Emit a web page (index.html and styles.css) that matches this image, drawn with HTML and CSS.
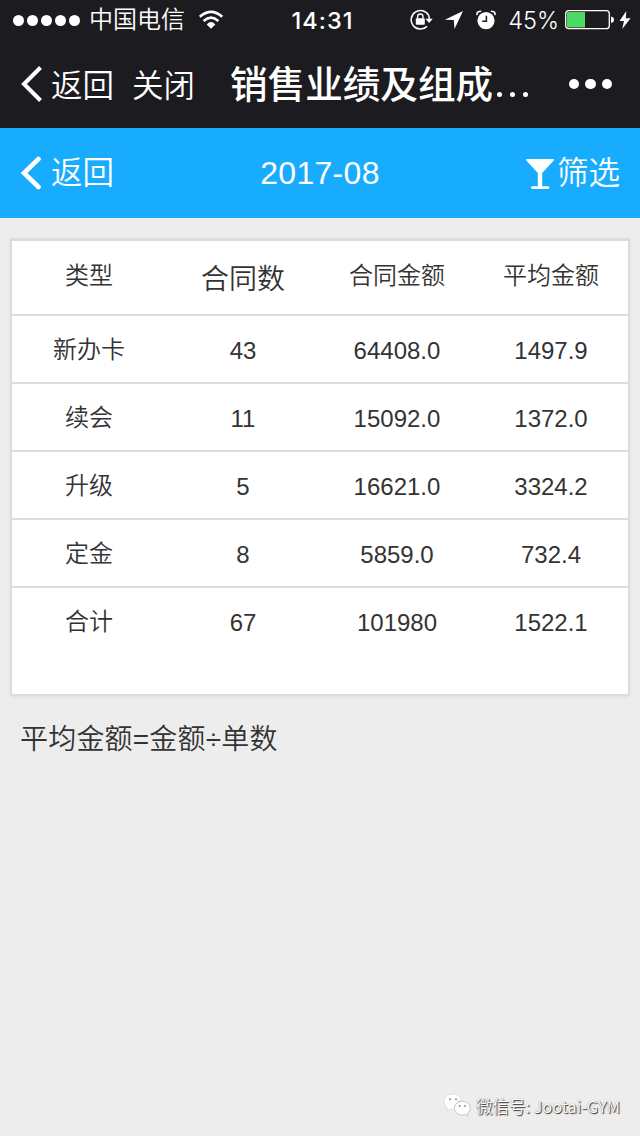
FILE: index.html
```html
<!DOCTYPE html>
<html lang="zh-CN">
<head>
    <meta charset="UTF-8">
    <meta name="viewport" content="width=device-width, initial-scale=1.0">
    <title>销售业绩及组成</title>
    <link rel="stylesheet" href="styles.css">
</head>
<body>

    <!-- Status bar -->
    <div class="status-bar">
        <div class="status-left">
            <div class="signal"><i></i><i></i><i></i><i></i><i></i></div>
            <span class="carrier">中国电信</span>
            <svg class="wifi" width="26" height="20" viewBox="0 0 26 20" fill="none" stroke="#fff" stroke-width="2.6">
                <path d="M1.8 6.8Q13-3.2 24.2 6.8" />
                <path d="M5.6 10.9Q13 4.5 20.4 10.9" />
                <path d="M8.7 14.4Q13 9.8 17.3 14.4L13 18.8Z" fill="#fff" stroke="none" />
            </svg>
        </div>
        <span class="clock">14:31</span>
        <div class="status-right">
            <svg width="24" height="22" viewBox="0 0 24 22">
                <path d="M19.6 6.2A9.3 9.3 0 1 0 18 17.4M19.6 6.2A9.3 9.3 0 0 1 20.2 10" fill="none" stroke="#fff" stroke-width="1.5" />
                <path d="M16.4 9.8H23.8L20.1 14Z" fill="#fff" />
                <rect x="6.8" y="9.2" width="9" height="6.6" rx="0.8" fill="#fff" />
                <path d="M8.6 9.5V7.7a2.7 2.7 0 0 1 5.4 0V9.5" fill="none" stroke="#fff" stroke-width="1.4" />
            </svg>
            <svg class="location" width="20" height="20" viewBox="0 0 20 20">
                <path d="M19 1L.8 9.7L9.8 10.1L10.5 19Z" fill="#fff" />
            </svg>
            <svg class="alarm" width="20" height="20" viewBox="0 0 20 20">
                <circle cx="10" cy="10.6" r="8.6" fill="#fff" />
                <path d="M1.1 5.1Q.3 1.2 5.2 1.2M18.9 5.1Q19.7 1.2 14.8 1.2" fill="none" stroke="#fff" stroke-width="1.6" />
                <path d="M10.4 5.7V11.2H6.2" fill="none" stroke="#1c1c20" stroke-width="1.5" />
            </svg>
            <span class="percent">45%</span>
            <svg class="battery" width="49" height="20" viewBox="0 0 49 20">
                <rect x=".7" y=".7" width="43.6" height="18" rx="3" fill="none" stroke="#fff" stroke-width="1.3" />
                <path d="M3 2H20V17.4H3Q2 17.4 2 16.4V3Q2 2 3 2Z" fill="#4cd964" />
                <path d="M46 6.5Q49 7 49 9.8T46 13Z" fill="#fff" />
            </svg>
            <svg class="bolt" width="12" height="20" viewBox="0 0 12 20">
                <path d="M7.3 1L.5 11H5L3.2 19L11.6 8.2H6.8Z" fill="#fff" />
            </svg>
        </div>
    </div>

    <!-- Browser bar -->
    <div class="nav-bar">
        <svg class="arrow" width="22" height="36" viewBox="0 0 22 36" fill="none" stroke="#fff" stroke-width="4">
            <path d="M20.5 1.5L4 18L20.5 34.5" />
        </svg>
        <span class="nav-link">返回</span>
        <span class="nav-link close">关闭</span>
        <span class="nav-title">销售业绩及组成<span class="ellipsis"><i></i><i></i><i></i></span></span>
        <div class="more"><i></i><i></i><i></i></div>
    </div>

    <!-- Page header -->
    <div class="page-header">
        <div class="header-back">
            <svg class="arrow" width="22" height="34" viewBox="0 0 22 34" fill="none" stroke="#fff" stroke-width="4.6" stroke-linecap="round">
                <path d="M18.5 3L4 17L18.5 31" />
            </svg>
            <span>返回</span>
        </div>
        <span class="header-date">2017-08</span>
        <div class="header-filter">
            <svg width="30" height="32" viewBox="0 0 30 32">
                <path d="M1.5 1H28.5Q29.5 1.5 28.5 2.8L17.2 15V28.2H23Q24.5 28.5 24.5 29.5T23 31H7.5Q6 30.8 6 29.6T7.5 28.2H12.8V15L1.5 2.8Q.5 1.5 1.5 1Z" fill="#fff" />
            </svg>
            <span>筛选</span>
        </div>
    </div>

    <div class="report">
        <div class="row head">
            <span>类型</span>
            <span class="count">合同数</span>
            <span>合同金额</span>
            <span>平均金额</span>
        </div>
        <div class="row"><span>新办卡</span><span class="num">43</span><span class="num">64408.0</span><span class="num">1497.9</span></div>
        <div class="row"><span>续会</span><span class="num">11</span><span class="num">15092.0</span><span class="num">1372.0</span></div>
        <div class="row"><span>升级</span><span class="num">5</span><span class="num">16621.0</span><span class="num">3324.2</span></div>
        <div class="row"><span>定金</span><span class="num">8</span><span class="num">5859.0</span><span class="num">732.4</span></div>
        <div class="row"><span>合计</span><span class="num">67</span><span class="num">101980</span><span class="num">1522.1</span></div>
    </div>

    <p class="note">平均金额=金额÷单数</p>

    <!-- WeChat account -->
    <div class="account">
        <svg width="28" height="26" viewBox="0 0 28 26">
            <path d="M10 1C4.5 1 1 4.5 1 8.7C1 11.3 2.2 13.3 4.3 14.7L3.5 18L7 16.2Q10 17 12 16.3C11.5 10.5 14.8 7.7 19 7.5C18 3.5 14.5 1 10 1Z" fill="#fff" stroke="#ccc" stroke-width=".6" />
            <path d="M19.2 8.4C14.5 8.4 11.5 11.5 11.5 15.3C11.5 19.2 14.6 22 19 22Q21 22 22.5 21.3L25 23.2L24.6 20.2C26.3 18.9 27.2 17.3 27.2 15.2C27.2 11.3 23.8 8.4 19.2 8.4Z" fill="#fff" stroke="#aaa" stroke-width=".6" />
            <g fill="#888">
                <circle cx="7" cy="6.2" r="1" />
                <circle cx="13" cy="6.2" r="1" />
                <circle cx="16.7" cy="13" r=".9" />
                <circle cx="22" cy="13" r=".9" />
            </g>
        </svg>
        <span>微信号: Jootai-GYM</span>
    </div>

</body>
</html>
```
FILE: styles.css
```css
body {
    margin: 0;
    height: 1136px;
    display: flex;
    flex-direction: column;
    background: #ededed;
    color: #333;
    font-family: "Liberation Sans", "Noto Sans CJK SC", sans-serif;
    font-weight: 350;
    overflow: hidden;
}

svg {
    display: block;
    flex: none;
}

span {
    white-space: nowrap;
}

.status-bar {
    height: 40px;
    display: grid;
    grid-template-columns: 1fr auto 1fr;
    grid-template-rows: 40px;
    align-items: center;
    padding: 0 10px 0 13px;
    background: #1c1c20;
    color: #fff;
}

.status-left,
.status-right {
    display: flex;
    align-items: center;
}

.status-right {
    justify-content: flex-end;
}

.signal {
    display: flex;
    gap: 3px;
}

.signal i {
    width: 11px;
    height: 11px;
    border-radius: 50%;
    background: #fff;
}

.carrier {
    margin-left: 9px;
    font-size: 24px;
    line-height: 42px;
}

.wifi {
    margin-left: 13px;
}

.clock {
    padding-left: 2px;
    font-family: Inter, sans-serif;
    font-size: 23.5px;
    font-weight: 500;
    letter-spacing: 1px;
}

.location {
    margin-left: 11px;
}

.alarm {
    margin-left: 12px;
}

.percent {
    margin-left: 12px;
    font-family: Inter, sans-serif;
    font-size: 23.5px;
    font-weight: 300;
}

.battery {
    margin-left: 6px;
}

.bolt {
    margin: 0 -1px 0 5px;
}

.nav-bar {
    height: 88px;
    display: flex;
    align-items: center;
    padding: 0 28px 0 20px;
    background: #1c1c20;
    color: #fff;
}

.nav-link {
    margin-left: 9px;
    font-size: 31.5px;
    line-height: 88px;
    padding-top: 3px;
}

.nav-link.close {
    margin-left: 18px;
}

.nav-title {
    display: flex;
    align-items: center;
    margin-left: 35px;
    font-size: 37.6px;
    font-weight: 500;
    line-height: 88px;
    padding-top: 1px;
}

.ellipsis {
    display: flex;
    gap: 8px;
    margin: 19px 0 0 4px;
}

.ellipsis i {
    width: 5px;
    height: 5px;
    border-radius: 50%;
    background: #fff;
}

.more {
    display: flex;
    gap: 6px;
    margin-left: auto;
}

.more i {
    width: 10.5px;
    height: 10.5px;
    border-radius: 50%;
    background: #fff;
}

.page-header {
    height: 90px;
    display: grid;
    grid-template-columns: 1fr auto 1fr;
    grid-template-rows: 90px;
    align-items: center;
    padding: 0 20px;
    background: #18acff;
    color: #fff;
    font-size: 31.5px;
    line-height: 91px;
}

.header-back,
.header-filter {
    display: flex;
    align-items: center;
}

.header-back span {
    margin-left: 9px;
}

.header-date {
    font-size: 32px;
    line-height: 90px;
    letter-spacing: 0.3px;
}

.header-filter {
    justify-content: flex-end;
}

.header-filter svg {
    margin: 1px 2px 0 0;
}

.report {
    height: 453px;
    margin: 20px 10px 0;
    border: 2px solid #dcdcdc;
    border-top-width: 3px;
    box-shadow: 0 1px 3px rgba(0, 0, 0, 0.06);
    background: #fff;
}

.row {
    height: 66px;
    display: grid;
    grid-template-columns: repeat(4, 1fr);
    border-bottom: 2px solid #dcdcdc;
    font-size: 24px;
    line-height: 68px;
    text-align: center;
}

.row:last-child {
    border-bottom: none;
}

.head {
    height: 73px;
    line-height: 70px;
}

.head .count {
    font-size: 28px;
    line-height: 77px;
}

.num {
    line-height: 70px;
}

.note {
    margin: 24px 20px 0;
    font-size: 28px;
    line-height: 40px;
    letter-spacing: 0.2px;
}

.account {
    display: flex;
    align-items: center;
    justify-content: flex-end;
    margin: auto 20px 15px 0;
}

.account span {
    margin-left: 5px;
    font-family: "Noto Sans CJK SC", sans-serif;
    font-size: 16.5px;
    line-height: 30px;
    color: #fff;
    text-shadow: 1px 1px 1px #333, 0 0 1px #777;
}
```
